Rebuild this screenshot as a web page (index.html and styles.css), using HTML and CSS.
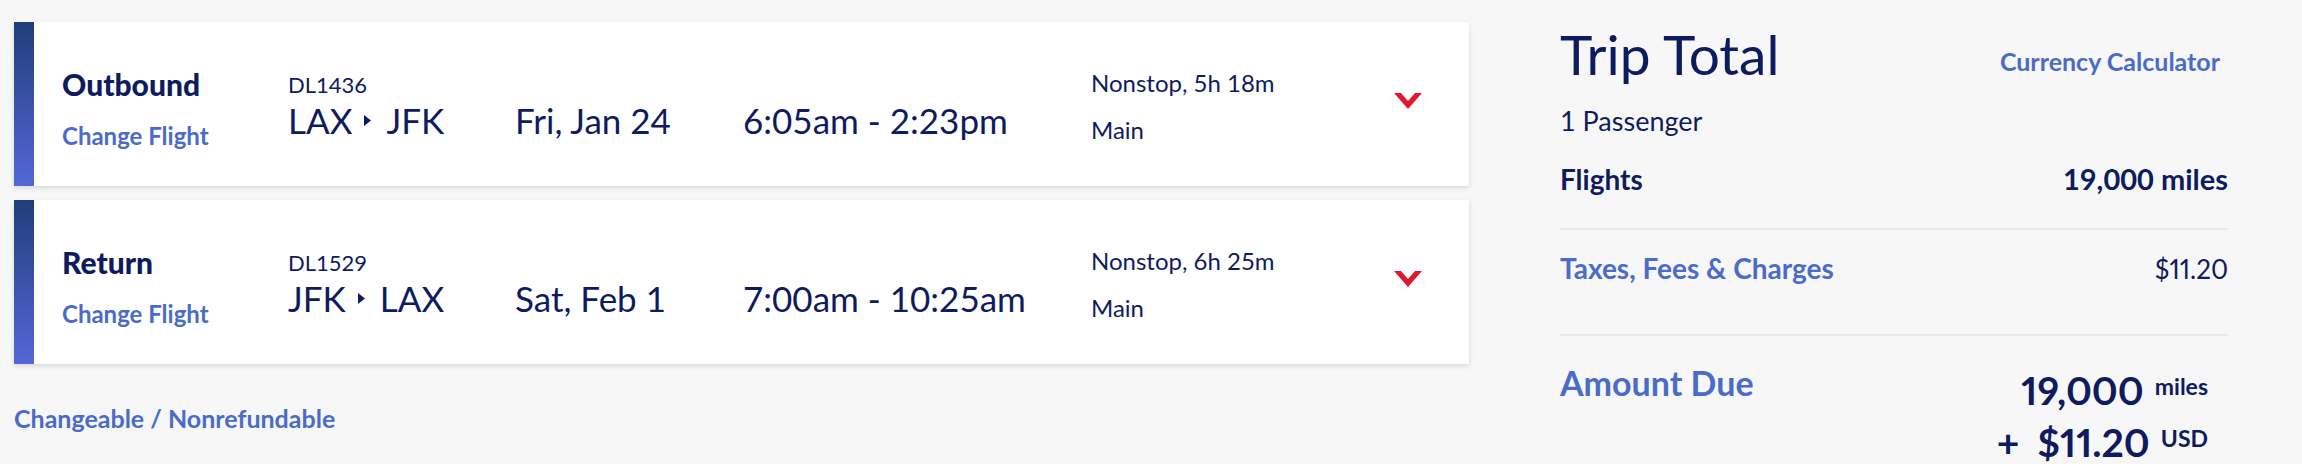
FILE: index.html
```html
<!DOCTYPE html>
<html lang="en">
<head>
<meta charset="utf-8">
<title>Trip Summary</title>
<link rel="stylesheet" href="styles.css">
</head>
<body>
<div class="page">
  <main class="trip">
    <section class="flight-card">
      <div class="accent"></div>
      <div class="card-body">
        <div class="col-label">
          <div class="leg">Outbound</div>
          <a class="change-link">Change Flight</a>
        </div>
        <div class="col-route">
          <div class="flight-no">DL1436</div>
          <div class="route">LAX<svg class="tri" viewBox="0 0 7 11" width="7" height="11"><polygon points="0,0 7,5.5 0,11" fill="#0e1b5e"/></svg>JFK</div>
        </div>
        <div class="col-date">Fri, Jan 24</div>
        <div class="col-time">6:05am - 2:23pm</div>
        <div class="col-stops">
          <div>Nonstop, 5h 18m</div>
          <div class="cabin">Main</div>
        </div>
        <div class="col-toggle">
          <svg viewBox="0 0 28 16" width="28" height="16"><polygon points="0,0 7,0 14,8 21,0 28,0 14,16" fill="#e0182f"/></svg>
        </div>
      </div>
    </section>
    <section class="flight-card">
      <div class="accent"></div>
      <div class="card-body">
        <div class="col-label">
          <div class="leg">Return</div>
          <a class="change-link">Change Flight</a>
        </div>
        <div class="col-route">
          <div class="flight-no">DL1529</div>
          <div class="route">JFK<svg class="tri" viewBox="0 0 7 11" width="7" height="11"><polygon points="0,0 7,5.5 0,11" fill="#0e1b5e"/></svg>LAX</div>
        </div>
        <div class="col-date">Sat, Feb 1</div>
        <div class="col-time">7:00am - 10:25am</div>
        <div class="col-stops">
          <div>Nonstop, 6h 25m</div>
          <div class="cabin">Main</div>
        </div>
        <div class="col-toggle">
          <svg viewBox="0 0 28 16" width="28" height="16"><polygon points="0,0 7,0 14,8 21,0 28,0 14,16" fill="#e0182f"/></svg>
        </div>
      </div>
    </section>
    <a class="fare-rules">Changeable / Nonrefundable</a>
  </main>

  <aside class="summary">
    <div class="summary-head">
      <h1 class="summary-title">Trip Total</h1>
      <a class="currency-link">Currency Calculator</a>
    </div>
    <div class="passengers">1 Passenger</div>
    <div class="line-item flights-row">
      <span>Flights</span>
      <span>19,000 miles</span>
    </div>
    <div class="divider first"></div>
    <div class="line-item taxes-row">
      <a class="taxes-link">Taxes, Fees &amp; Charges</a>
      <span class="taxes-value">$11.20</span>
    </div>
    <div class="divider second"></div>
    <div class="amount-row">
      <div class="amount-label">Amount Due</div>
      <div class="amount-values">
        <div class="amount-line">19,000<span class="unit">miles</span></div>
        <div class="amount-line"><span class="plus">+</span>$11.20<span class="unit">USD</span></div>
      </div>
    </div>
  </aside>
</div>
</body>
</html>
```

FILE: styles.css
```css
html, body {
  margin: 0;
  padding: 0;
}

body {
  background: #f7f7f7;
  font-family: Lato, "Open Sans", "Liberation Sans", sans-serif;
  color: #0e1b5e;
  line-height: 1.2;
  overflow: hidden;
}

a {
  cursor: pointer;
}

.page {
  display: flex;
  align-items: flex-start;
  gap: 91px;
  padding: 22px 0 0 14px;
}

/* ---------- Flight cards ---------- */

.trip {
  width: 1455px;
  display: flex;
  flex-direction: column;
  gap: 14px;
}

.flight-card {
  display: flex;
  height: 164px;
  background: #ffffff;
  box-shadow: 0 2px 5px rgba(0, 0, 0, 0.13);
}

.accent {
  width: 20px;
  flex: none;
  background: linear-gradient(to bottom, #213e7b, #5268d7);
}

.card-body {
  flex: 1;
  display: flex;
  align-items: flex-start;
  padding: 44px 0 0 28px;
}

.col-label {
  width: 226px;
  display: flex;
  flex-direction: column;
  align-items: flex-start;
}

.leg {
  font-size: 30px;
  font-weight: 900;
}

.change-link {
  margin-top: 20px;
  font-size: 24px;
  font-weight: 700;
  color: #4a6cc8;
}

.col-route {
  width: 227px;
  margin-top: 6px;
}

.flight-no {
  font-size: 22px;
}

.route {
  margin-top: 1px;
  font-size: 35px;
  display: flex;
  align-items: center;
}

.tri {
  margin: 0 15px 0 12px;
}

.col-date {
  width: 228px;
  margin-top: 33px;
  font-size: 35px;
}

.col-time {
  width: 348px;
  margin-top: 33px;
  font-size: 35px;
}

.col-stops {
  width: 303px;
  margin-top: 3px;
  font-size: 24px;
}

.cabin {
  margin-top: 18px;
}

.col-toggle {
  margin-top: 27px;
  line-height: 0;
}

.fare-rules {
  margin-top: 25px;
  font-size: 25px;
  font-weight: 700;
  color: #4a6cc8;
}

/* ---------- Summary ---------- */

.summary {
  width: 668px;
  display: flex;
  flex-direction: column;
}

.summary-head {
  display: flex;
  justify-content: space-between;
  align-items: flex-start;
}

.summary-title {
  margin: -1px 0 0 0;
  font-size: 55px;
  font-weight: 400;
}

.currency-link {
  margin: 24px 8px 0 0;
  font-size: 25px;
  font-weight: 700;
  color: #4a6cc8;
}

.passengers {
  margin-top: 18px;
  font-size: 27px;
}

.line-item {
  display: flex;
  justify-content: space-between;
  align-items: baseline;
}

.flights-row {
  margin-top: 25px;
  font-size: 28px;
  font-weight: 700;
}

.flights-row span:last-child {
  font-size: 29px;
}

.divider {
  height: 2px;
  background: #e4e8f1;
}

.divider.first {
  margin-top: 31px;
}

.taxes-row {
  margin-top: 22px;
  font-size: 28px;
}

.taxes-link {
  font-weight: 700;
  color: #4a6cc8;
}

.taxes-value {
  font-size: 26px;
  font-variant-numeric: proportional-nums;
}

.divider.second {
  margin-top: 48px;
}

.amount-row {
  margin-top: 27px;
  display: flex;
  justify-content: space-between;
  align-items: flex-start;
}

.amount-label {
  font-size: 34px;
  font-weight: 700;
  color: #4a6cc8;
}

.amount-values {
  display: flex;
  flex-direction: column;
  align-items: flex-end;
  padding-right: 20px;
  margin-top: -1px;
}

.amount-line {
  font-size: 39px;
  font-weight: 700;
  line-height: 48px;
  font-variant-numeric: proportional-nums;
}

.unit {
  margin-left: 11px;
  font-size: 23px;
  vertical-align: 10px;
}

.plus {
  margin-right: 18px;
}
```
